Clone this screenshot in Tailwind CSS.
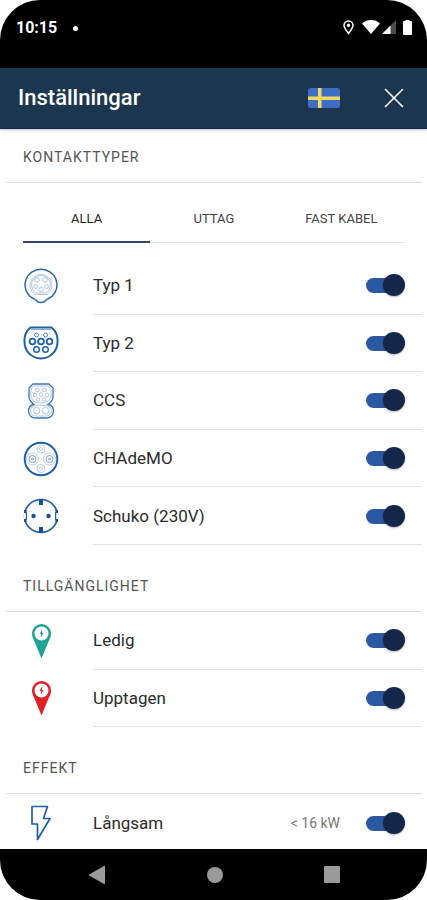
<!DOCTYPE html>
<html lang="sv">
<head>
  <meta charset="UTF-8">
  <meta name="viewport" content="width=device-width, initial-scale=1.0">
  <title>Inställningar</title>
  <script src="https://cdn.jsdelivr.net/npm/@tailwindcss/browser@4"></script>
</head>
<body class="bg-white font-['Roboto',sans-serif]">
  <div class="h-screen flex flex-col overflow-hidden rounded-[40px] bg-white text-[#2b2b2b]">

    <!-- Status bar -->
    <div class="h-[68px] shrink-0 bg-black text-white flex items-start justify-between pl-4 pr-[15px] pt-[18px]">
      <div class="flex items-center gap-4 h-5">
        <span class="text-base leading-5 font-bold">10:15</span>
        <span class="w-[5px] h-[5px] rounded-full bg-white"></span>
      </div>
      <div class="flex items-center h-[18px]">
        <svg class="w-[11px] h-[15px] mr-2" viewBox="0 0 11 15" fill="none" stroke="white" stroke-width="1.5"><path d="M5.5 13.5C3 10.2 1 7.8 1 5.5a4.5 4.5 0 0 1 9 0c0 2.3-2 4.7-4.5 8z"/><circle cx="5.5" cy="5.3" r="1.3" fill="white" stroke-width="1"/></svg>
        <svg class="w-[18px] h-[14px] mr-[2px]" viewBox="0 0 18 14" fill="white"><path d="M9 14 0 3.5C2.5 1 5.5 0 9 0s6.500 1 9 3.500z"/></svg>
        <svg class="w-[14px] h-[14px] mr-[7px]" viewBox="0 0 14 14"><path d="M14 0v14H0z" fill="#4d4d4d"/><path d="M8.500 5.500V14H0z" fill="white"/></svg>
        <svg class="w-[9px] h-[15px]" viewBox="0 0 9 15" fill="white"><path d="M2.500 0h4v1H8a1 1 0 0 1 1 1V14a1 1 0 0 1-1 1H1a1 1 0 0 1-1-1V2a1 1 0 0 1 1-1h1.500z"/></svg>
      </div>
    </div>

    <!-- Header -->
    <header class="h-[61px] shrink-0 bg-[#1d364f] border-b border-[#16234a] text-white flex items-center px-[19px] shadow-[0_1px_3px_rgba(0,0,0,0.25)] z-10">
      <h1 class="text-[22px] leading-7 font-medium flex-1 -ml-px">Inställningar</h1>
      <button type="button" aria-label="Språk" class="mr-10">
        <svg class="w-8 h-5 block" viewBox="0 0 32 20"><rect width="32" height="20" rx="2.5" fill="#3f6cc4"/><path d="M10 0h3.500v20H10zM0 8.500h32V12H0z" fill="#f2da62"/></svg>
      </button>
      <button type="button" aria-label="Stäng" class="p-1">
        <svg class="w-5 h-5 block" viewBox="0 0 20 20" fill="none" stroke="white" stroke-width="1.6" stroke-linecap="round"><path d="M1.500 1.500l17 17M18.500 1.500l-17 17"/></svg>
      </button>
    </header>

    <main class="flex-1 min-h-0 overflow-y-auto [scrollbar-width:none] pl-[6px] pr-[5px]">

      <!-- Kontakttyper -->
      <section>
        <h2 class="h-[54px] flex items-center pt-[2px] pl-[17px] border-b border-[#dedede] text-sm tracking-[1px] text-[#555]">KONTAKTTYPER</h2>
        <div role="tablist" class="grid grid-cols-3 h-12 mt-3 mb-[14px] ml-[17px] mr-[17px] text-[13px] text-[#444]">
          <button type="button" role="tab" aria-selected="true" class="border-b-2 border-[#36466a] text-[#222] pt-px">ALLA</button>
          <button type="button" role="tab" aria-selected="false" class="border-b border-[#e4e4e4]">UTTAG</button>
          <button type="button" role="tab" aria-selected="false" class="border-b border-[#e4e4e4]">FAST KABEL</button>
        </div>
        <ul class="h-[288px] flex flex-col pl-[17px]">
          <li class="flex-1 flex">
            <svg class="w-9 h-9 mr-[34px] self-center" viewBox="0 0 36 36" fill="none" stroke="#2c68ab"><path d="M18 1.200A15.800 15.800 0 0 0 7 28.500l6 3.500q1 2.500 5 2.500t5-2.500l6-3.500A15.800 15.800 0 0 0 18 1.200z" stroke-width="1.5"/><path d="M10 31q2 1 3 2M26 31q-2 1-3 2" stroke="#8fadd2"/><g stroke="#9fb9d9" stroke-width=".8"><path d="M12 26.500a11 11 0 1 1 12 0z"/><path d="M13 25a9.500 9.500 0 1 1 10 0z"/><circle cx="14" cy="12" r="2.300"/><circle cx="22" cy="12" r="2.300"/><circle cx="12.500" cy="18.500" r="2"/><circle cx="23.500" cy="18.500" r="2"/><circle cx="18" cy="21.500" r="2.300"/></g></svg>
            <div class="flex-1 flex items-center border-b border-[#e2e2e2] pr-[17px]">
              <label for="typ1" class="flex-1 text-[17px] leading-6">Typ 1</label>
              <input type="checkbox" role="switch" id="typ1" checked class="appearance-none relative w-[39px] h-[22px] before:absolute before:left-0 before:top-[4px] before:w-8 before:h-[15px] before:rounded-full before:bg-gray-400 checked:before:bg-[#2b58a2] after:absolute after:left-0 checked:after:left-[17px] after:top-0 after:w-[22px] after:h-[22px] after:rounded-full after:bg-[#14264a] after:shadow-[0_1px_2px_rgba(0,0,0,0.3)]">
            </div>
          </li>
          <li class="flex-1 flex">
            <svg class="w-9 h-9 mr-[34px] self-center" viewBox="0 0 36 36" fill="none" stroke="#1f5fa8"><path d="M7.500 2.500h21a17 17 0 0 1 6 14.500 16.500 16.500 0 0 1-33 0A17 17 0 0 1 7.500 2.500z" stroke-width="2"/><path d="M8 4.500h20" stroke="#8fadd2"/><g stroke-width="1.800"><circle cx="9.500" cy="16.500" r="2.900"/><circle cx="18" cy="16.500" r="2.900"/><circle cx="26.500" cy="16.500" r="2.900"/></g><g stroke-width="1.400"><circle cx="13.500" cy="24.500" r="2.800"/><circle cx="22.500" cy="24.500" r="2.800"/></g><g stroke-width=".8"><circle cx="13.500" cy="10" r="2"/><circle cx="22.500" cy="10" r="2"/></g></svg>
            <div class="flex-1 flex items-center border-b border-[#e2e2e2] pr-[17px]">
              <label for="typ2" class="flex-1 text-[17px] leading-6">Typ 2</label>
              <input type="checkbox" role="switch" id="typ2" checked class="appearance-none relative w-[39px] h-[22px] before:absolute before:left-0 before:top-[4px] before:w-8 before:h-[15px] before:rounded-full before:bg-gray-400 checked:before:bg-[#2b58a2] after:absolute after:left-0 checked:after:left-[17px] after:top-0 after:w-[22px] after:h-[22px] after:rounded-full after:bg-[#14264a] after:shadow-[0_1px_2px_rgba(0,0,0,0.3)]">
            </div>
          </li>
          <li class="flex-1 flex">
            <svg class="w-9 h-9 mr-[34px] self-center" viewBox="0 0 36 36" fill="none" stroke="#3f76b5"><path d="M10 1h16l4 4v9q0 4-5 7.500 5.500 1 5.500 6.500-.5 7-7.500 7H13q-7 0-7.500-7 0-5.500 5.500-6.500-5-3.500-5-7.500V5z" stroke-width="1.300"/><g stroke="#9fb9d9" stroke-width=".8"><path d="M11 3h14l3 3v8q-2 6-10 6T8 14V6z"/><circle cx="14.500" cy="7" r="1.800"/><circle cx="21.500" cy="7" r="1.800"/><circle cx="12" cy="12" r="1.800"/><circle cx="18" cy="11.500" r="2"/><circle cx="24" cy="12" r="1.800"/><circle cx="15" cy="16.500" r="1.800"/><circle cx="21" cy="16.500" r="1.800"/><rect x="7.500" y="22.500" width="21" height="10.500" rx="5.200"/><circle cx="13.500" cy="27.700" r="3.300"/><circle cx="22.500" cy="27.700" r="3.300"/></g></svg>
            <div class="flex-1 flex items-center border-b border-[#e2e2e2] pr-[17px]">
              <label for="ccs" class="flex-1 text-[17px] leading-6">CCS</label>
              <input type="checkbox" role="switch" id="ccs" checked class="appearance-none relative w-[39px] h-[22px] before:absolute before:left-0 before:top-[4px] before:w-8 before:h-[15px] before:rounded-full before:bg-gray-400 checked:before:bg-[#2b58a2] after:absolute after:left-0 checked:after:left-[17px] after:top-0 after:w-[22px] after:h-[22px] after:rounded-full after:bg-[#14264a] after:shadow-[0_1px_2px_rgba(0,0,0,0.3)]">
            </div>
          </li>
          <li class="flex-1 flex">
            <svg class="w-9 h-9 mr-[34px] self-center" viewBox="0 0 36 36" fill="none" stroke="#1f5fa8"><circle cx="18" cy="18" r="16.300" stroke-width="1.900"/><g stroke="#a9c1de" stroke-width=".8"><circle cx="9.500" cy="18" r="6"/><circle cx="26.500" cy="18" r="6"/><circle cx="18" cy="8" r="4"/><circle cx="18" cy="27.500" r="4"/><circle cx="18" cy="8" r="1.500"/><circle cx="18" cy="27.500" r="1.500"/></g><g stroke="#7ea3cd" stroke-width="1"><circle cx="9.500" cy="18" r="3.500"/><circle cx="26.500" cy="18" r="3.500"/><circle cx="9.500" cy="18" r="1"/><circle cx="26.500" cy="18" r="1"/></g></svg>
            <div class="flex-1 flex items-center border-b border-[#e2e2e2] pr-[17px]">
              <label for="chademo" class="flex-1 text-[17px] leading-6">CHAdeMO</label>
              <input type="checkbox" role="switch" id="chademo" checked class="appearance-none relative w-[39px] h-[22px] before:absolute before:left-0 before:top-[4px] before:w-8 before:h-[15px] before:rounded-full before:bg-gray-400 checked:before:bg-[#2b58a2] after:absolute after:left-0 checked:after:left-[17px] after:top-0 after:w-[22px] after:h-[22px] after:rounded-full after:bg-[#14264a] after:shadow-[0_1px_2px_rgba(0,0,0,0.3)]">
            </div>
          </li>
          <li class="flex-1 flex">
            <svg class="w-9 h-9 mr-[34px] self-center" viewBox="0 0 36 36" fill="none" stroke="#1f5fa8"><circle cx="18" cy="18" r="16.500" stroke-width="1.600"/><path d="M1.500 15v6M34.500 15v6" stroke="white" stroke-width="2"/><path d="M1.500 14.500h2v7h-2M34.500 14.500h-2v7h2" stroke-width="1"/><g fill="#174f97" stroke="none"><path d="M16 1h4v6h-4zM16 29h4v6h-4z"/><path d="M1 12h2.500v3H1zM1 21h2.500v3H1zM32.500 12H35v3h-2.500zM32.500 21H35v3h-2.500z"/><circle cx="10.500" cy="18" r="2.200"/><circle cx="25.500" cy="18" r="2.200"/></g></svg>
            <div class="flex-1 flex items-center border-b border-[#e2e2e2] pr-[17px]">
              <label for="schuko" class="flex-1 text-[17px] leading-6">Schuko (230V)</label>
              <input type="checkbox" role="switch" id="schuko" checked class="appearance-none relative w-[39px] h-[22px] before:absolute before:left-0 before:top-[4px] before:w-8 before:h-[15px] before:rounded-full before:bg-gray-400 checked:before:bg-[#2b58a2] after:absolute after:left-0 checked:after:left-[17px] after:top-0 after:w-[22px] after:h-[22px] after:rounded-full after:bg-[#14264a] after:shadow-[0_1px_2px_rgba(0,0,0,0.3)]">
            </div>
          </li>
        </ul>
      </section>

      <!-- Tillgänglighet -->
      <section class="mt-[13px]">
        <h2 class="h-[54px] flex items-center pt-[2px] pl-[17px] border-b border-[#dedede] text-sm tracking-[1px] text-[#555]">TILLGÄNGLIGHET</h2>
        <ul class="h-[115px] flex flex-col pl-[17px]">
          <li class="flex-1 flex">
            <svg class="w-9 h-9 mr-[34px] self-center" viewBox="0 0 36 36"><path d="M18.500 1a9.500 9.500 0 0 0-9.500 9.500c0 3 1.200 5.500 2.500 8l7 17 7-17c1.300-2.500 2.500-5 2.500-8A9.500 9.500 0 0 0 18.500 1z" fill="#1fa394"/><circle cx="18.500" cy="10.500" r="7" fill="white"/><path d="M19.200 6.500l-2.700 4.300h1.700l-.4 3.700 2.700-4.600h-1.700z" fill="#1fa394"/></svg>
            <div class="flex-1 flex items-center border-b border-[#e2e2e2] pr-[17px]">
              <label for="ledig" class="flex-1 text-[17px] leading-6">Ledig</label>
              <input type="checkbox" role="switch" id="ledig" checked class="appearance-none relative w-[39px] h-[22px] before:absolute before:left-0 before:top-[4px] before:w-8 before:h-[15px] before:rounded-full before:bg-gray-400 checked:before:bg-[#2b58a2] after:absolute after:left-0 checked:after:left-[17px] after:top-0 after:w-[22px] after:h-[22px] after:rounded-full after:bg-[#14264a] after:shadow-[0_1px_2px_rgba(0,0,0,0.3)]">
            </div>
          </li>
          <li class="flex-1 flex">
            <svg class="w-9 h-9 mr-[34px] self-center" viewBox="0 0 36 36"><path d="M18.500 1a9.500 9.500 0 0 0-9.500 9.500c0 3 1.200 5.500 2.500 8l7 17 7-17c1.300-2.500 2.500-5 2.500-8A9.500 9.500 0 0 0 18.500 1z" fill="#e01f26"/><circle cx="18.500" cy="10.500" r="7" fill="white"/><path d="M19.200 6.500l-2.700 4.300h1.700l-.4 3.700 2.700-4.600h-1.700z" fill="#e01f26"/></svg>
            <div class="flex-1 flex items-center border-b border-[#e2e2e2] pr-[17px]">
              <label for="upptagen" class="flex-1 text-[17px] leading-6">Upptagen</label>
              <input type="checkbox" role="switch" id="upptagen" checked class="appearance-none relative w-[39px] h-[22px] before:absolute before:left-0 before:top-[4px] before:w-8 before:h-[15px] before:rounded-full before:bg-gray-400 checked:before:bg-[#2b58a2] after:absolute after:left-0 checked:after:left-[17px] after:top-0 after:w-[22px] after:h-[22px] after:rounded-full after:bg-[#14264a] after:shadow-[0_1px_2px_rgba(0,0,0,0.3)]">
            </div>
          </li>
        </ul>
      </section>

      <!-- Effekt -->
      <section class="mt-[13px]">
        <h2 class="h-[54px] flex items-center pt-[2px] pl-[17px] border-b border-[#dedede] text-sm tracking-[1px] text-[#555]">EFFEKT</h2>
        <ul class="h-[58px] flex flex-col pl-[17px]">
          <li class="flex-1 flex">
            <svg class="w-9 h-9 mr-[34px] self-center" viewBox="0 0 36 36" fill="none" stroke="#1f5fa8" stroke-width="1.7" stroke-linejoin="round"><path d="M9 1.500h15.500l-4 12h6.500L14.500 34.500V19H9z"/></svg>
            <div class="flex-1 flex items-center border-b border-[#e2e2e2] pr-[17px]">
              <label for="langsam" class="flex-1 text-[17px] leading-6">Långsam</label>
              <span class="text-sm text-[#777] mr-[26px]">&lt; 16 kW</span>
              <input type="checkbox" role="switch" id="langsam" checked class="appearance-none relative w-[39px] h-[22px] before:absolute before:left-0 before:top-[4px] before:w-8 before:h-[15px] before:rounded-full before:bg-gray-400 checked:before:bg-[#2b58a2] after:absolute after:left-0 checked:after:left-[17px] after:top-0 after:w-[22px] after:h-[22px] after:rounded-full after:bg-[#14264a] after:shadow-[0_1px_2px_rgba(0,0,0,0.3)]">
            </div>
          </li>
        </ul>
      </section>
    </main>

    <!-- Android navigation -->
    <nav class="h-[51px] shrink-0 bg-black flex items-center justify-around px-[37px]">
      <button type="button" aria-label="Tillbaka"><svg class="w-[18px] h-5 block" viewBox="0 0 18 20" fill="#9a9a9a"><path d="M17 1v18a1 1 0 0 1-1 0L1 10.500a.6.6 0 0 1 0-1L16 1a1 1 0 0 1 1 0z"/></svg></button>
      <button type="button" aria-label="Hem" class="w-4 h-4 rounded-full bg-[#9a9a9a]"></button>
      <button type="button" aria-label="Översikt" class="w-4 h-[17px] rounded-[1px] bg-[#9a9a9a]"></button>
    </nav>
  </div>
</body>
</html>
